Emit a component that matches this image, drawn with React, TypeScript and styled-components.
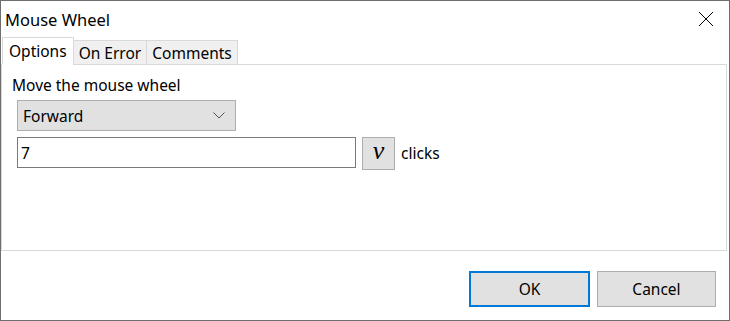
import React, { useState } from "react";
import styled, { createGlobalStyle } from "styled-components";

const GlobalStyle = createGlobalStyle`
	html, body {
		margin: 0;
		padding: 0;
		background: #ffffff;
	}
	body {
		font-family: "Noto Sans", "Open Sans", sans-serif;
		color: #000;
	}
`;

const Window = styled.div`
	width: 730px;
	height: 321px;
	box-sizing: border-box;
	border: 1px solid #6e6e6e;
	background: #fff;
	display: flex;
	flex-direction: column;
`;

const TitleBar = styled.div`
	height: 36px;
	display: flex;
	align-items: center;
	justify-content: space-between;
	padding: 0 0 0 4px;
	font-size: 16.5px;
`;

const CloseButton = styled.button`
	width: 46px;
	height: 36px;
	border: none;
	background: transparent;
	display: flex;
	align-items: center;
	justify-content: center;
	padding: 0;
`;

const TabStrip = styled.div`
	display: flex;
	align-items: flex-end;
	padding-left: 1px;
	height: 28px;
	position: relative;
	z-index: 1;
`;

const Tab = styled.div<{ $active?: boolean }>`
	box-sizing: border-box;
	height: ${p => (p.$active ? "28px" : "25px")};
	padding: 0 ${p => (p.$active ? "6px" : "5px")};
	font-size: 15.5px;
	display: flex;
	align-items: center;
	border: 1px solid #d9d9d9;
	border-bottom: ${p => (p.$active ? "1px solid #fff" : "1px solid #d9d9d9")};
	background: ${p => (p.$active ? "#fff" : "#f0f0f0")};
	margin-left: -1px;
	&:first-child {
		margin-left: 0;
	}
`;

const Panel = styled.div`
	margin: -1px 2px 0 0;
	height: 187px;
	box-sizing: border-box;
	border: 1px solid #d9d9d9;
	padding: 10px 0 0 10px;
`;

const Label = styled.div`
	font-size: 15.5px;
	line-height: 21px;
`;

const Row = styled.div`
	display: flex;
	align-items: center;
	margin-left: 5px;
	margin-top: 4px;
`;

const Select = styled.div`
	box-sizing: border-box;
	width: 219px;
	height: 31px;
	background: #e1e1e1;
	border: 1px solid #adadad;
	display: flex;
	align-items: center;
	justify-content: space-between;
	padding: 0 10px 0 5px;
	font-size: 15.5px;
`;

const TextInput = styled.input`
	box-sizing: border-box;
	width: 339px;
	height: 31px;
	border: 1px solid #7a7a7a;
	font-family: inherit;
	font-size: 15.5px;
	padding: 0 3px;
	outline: none;
`;

const VarButton = styled.button`
	box-sizing: border-box;
	width: 33px;
	height: 33px;
	margin-left: 6px;
	margin-top: 2px;
	background: #e1e1e1;
	border: 1px solid #adadad;
	font-family: "Liberation Serif", "DejaVu Serif", serif;
	font-style: italic;
	font-size: 26px;
	line-height: 1;
	padding: 0 0 5px 0;
	display: flex;
	align-items: center;
	justify-content: center;
	color: #000;
`;

const Suffix = styled.span`
	margin-left: 6px;
	font-size: 15.5px;
`;

const Footer = styled.div`
	flex: 1;
	display: flex;
	justify-content: flex-end;
	align-items: flex-start;
	padding: 20px 13px 0 0;
	gap: 7px;
`;

const DialogButton = styled.button<{ $default?: boolean }>`
	box-sizing: border-box;
	width: ${p => (p.$default ? "121px" : "119px")};
	height: 36px;
	background: #e1e1e1;
	border: ${p => (p.$default ? "2px solid #0078d7" : "1px solid #adadad")};
	font-family: inherit;
	font-size: 15.5px;
	color: #000;
`;

export default function App() {
	const [clicks, setClicks] = useState("7");
	return (
		<>
			<GlobalStyle />
			<Window>
				<TitleBar>
					<span>Mouse Wheel</span>
					<CloseButton aria-label="Close">
						<svg width="16" height="16" viewBox="0 0 16 16">
							<path d="M1 1 L15 15 M15 1 L1 15" stroke="#000" strokeWidth="1" fill="none" />
						</svg>
					</CloseButton>
				</TitleBar>
				<TabStrip>
					<Tab $active>Options</Tab>
					<Tab>On Error</Tab>
					<Tab>Comments</Tab>
				</TabStrip>
				<Panel>
					<Label>Move the mouse wheel</Label>
					<Row>
						<Select>
							<span>Forward</span>
							<svg width="12" height="7" viewBox="0 0 12 7">
								<path d="M0.5 0.5 L6 6 L11.5 0.5" stroke="#555" strokeWidth="1" fill="none" />
							</svg>
						</Select>
					</Row>
					<Row>
						<TextInput value={clicks} onChange={e => setClicks(e.target.value)} />
						<VarButton>v</VarButton>
						<Suffix>clicks</Suffix>
					</Row>
				</Panel>
				<Footer>
					<DialogButton $default>OK</DialogButton>
					<DialogButton>Cancel</DialogButton>
				</Footer>
			</Window>
		</>
	);
}
